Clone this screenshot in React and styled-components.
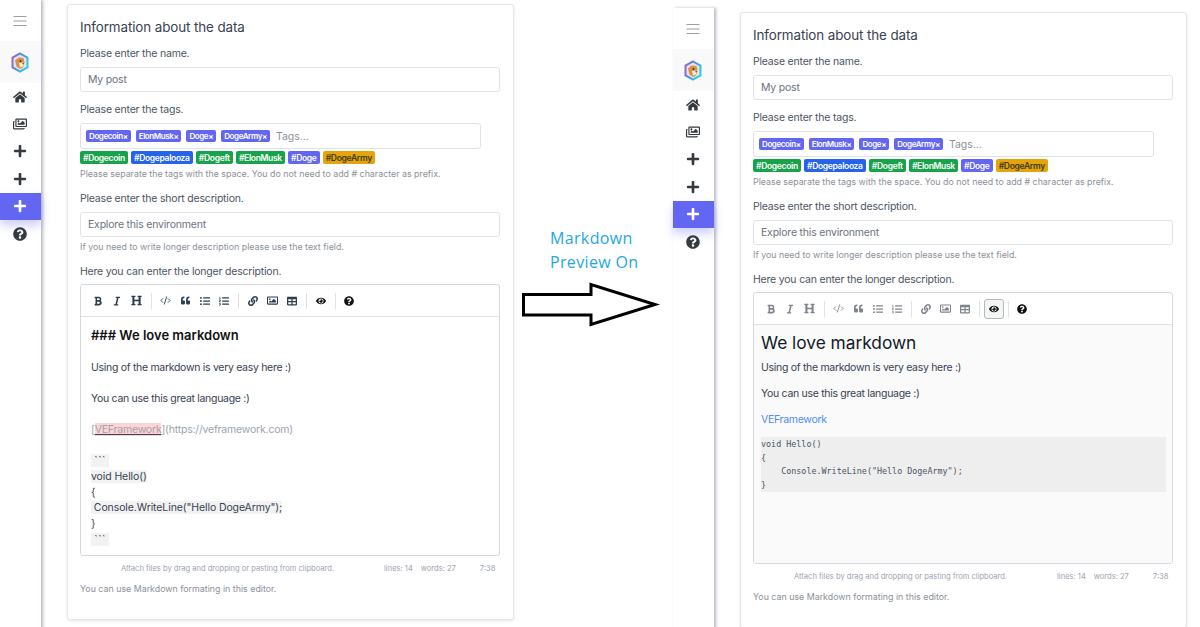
import React from 'react';
import styled, { createGlobalStyle } from 'styled-components';
import {
  FaHome, FaPlus, FaQuestionCircle, FaRegImages, FaBold, FaItalic, FaHeading,
  FaQuoteLeft, FaListUl, FaListOl, FaLink, FaRegImage, FaTable, FaEye
} from 'react-icons/fa';
import { LuCodeXml } from 'react-icons/lu';

const GlobalStyle = createGlobalStyle`
  html, body { margin: 0; padding: 0; background: #fff; height: 627px; overflow: hidden; }
  body { font-family: Inter, "Noto Sans", sans-serif; color: #4b5563; }
`;

const Page = styled.div`
  display: flex;
  width: 1200px;
  height: 627px;
  overflow: hidden;
`;

const Shot = styled.div`
  display: flex;
  flex: none;
  width: ${props => props.$width}px;
  height: 640px;
  margin-top: ${props => props.$top}px;
`;

const Sidebar = styled.nav`
  flex: none;
  width: 41px;
  background: #fff;
  box-shadow: 2px 0 3px rgba(90, 100, 130, 0.45);
  display: flex;
  flex-direction: column;
  align-items: stretch;
`;

const MenuButton = styled.div`
  height: 41px;
  padding-right: 1px;
  display: flex;
  align-items: center;
  justify-content: center;
`;

const LogoBox = styled.div`
  height: 42px;
  padding-right: 1px;
  background: #f9f9f9;
  display: flex;
  align-items: center;
  justify-content: center;
`;

const NavItem = styled.div`
  height: 27.4px;
  padding-right: 1px;
  display: flex;
  align-items: center;
  justify-content: center;
  font-size: 14px;
  color: ${props => (props.$active ? '#fff' : '#343a40')};
  background: ${props => (props.$active ? '#6366f1' : 'transparent')};
  box-shadow: ${props => (props.$active ? '0 6px 10px rgba(99, 102, 241, 0.3)' : 'none')};
`;

const Card = styled.section`
  flex: none;
  width: 447px;
  height: 616px;
  box-sizing: border-box;
  margin: 4px 0 0 26px;
  padding: 13px 13px 0 12px;
  border: 1px solid #e5e7eb;
  border-radius: 3px;
  box-shadow: 0 1px 3px rgba(0, 0, 0, 0.1);
  background: #fff;
`;

const Title = styled.h2`
  margin: 0;
  font-size: 13.4px;
  line-height: 19px;
  letter-spacing: -0.1px;
  font-weight: 400;
  color: #374151;
`;

const Label = styled.div`
  font-size: 10.5px;
  line-height: 14px;
  letter-spacing: -0.2px;
  color: #4b5563;
  margin-top: ${props => props.$top}px;
`;

const Input = styled.div`
  box-sizing: border-box;
  height: 25px;
  margin-top: 6px;
  padding: 0 7px;
  display: flex;
  align-items: center;
  border: 1px solid #dfe3e8;
  border-radius: 3px;
  font-size: 10.5px;
  letter-spacing: -0.2px;
  color: #6b7280;
`;

const TagBox = styled.div`
  box-sizing: border-box;
  width: 401px;
  height: 26px;
  margin-top: 6px;
  padding: 0 5px;
  display: flex;
  align-items: center;
  gap: 5px;
  border: 1px solid #dfe3e8;
  border-radius: 3px;
`;

const Placeholder = styled.span`
  margin-left: 1px;
  font-size: 10.5px;
  color: #8b919a;
`;

const Chip = styled.span`
  display: inline-flex;
  align-items: center;
  height: ${props => (props.$small ? 12 : 13)}px;
  padding: 0 3px;
  border-radius: 2px;
  font-size: ${props => (props.$small ? 8 : 8.5)}px;
  font-weight: 600;
  letter-spacing: ${props => (props.$small ? -0.4 : -0.32)}px;
  white-space: nowrap;
  color: ${props => (props.$dark ? '#3f3a1a' : '#fff')};
  background: ${props => props.$color};
`;

const ChipRow = styled.div`
  display: flex;
  gap: 3.2px;
  margin-top: 2px;
`;

const Help = styled.div`
  font-size: 8.85px;
  line-height: 12px;
  margin-top: ${props => props.$top}px;
  color: #8b919a;
  white-space: nowrap;
`;

const Editor = styled.div`
  box-sizing: border-box;
  height: 272px;
  margin-top: 5px;
  border: 1px solid #d6d9dd;
  border-radius: 3px;
  display: flex;
  flex-direction: column;
`;

const Toolbar = styled.div`
  flex: none;
  height: 32px;
  box-sizing: border-box;
  padding-left: 7px;
  display: flex;
  align-items: center;
  border-bottom: 1px solid #dfe1e4;
  color: ${props => (props.$muted ? '#7f848b' : '#2c3e50')};
`;

const Tool = styled.span`
  width: 19.6px;
  height: 20px;
  box-sizing: border-box;
  display: flex;
  align-items: center;
  justify-content: center;
  font-size: ${props => props.$size || 10}px;
  border: 1px solid ${props => (props.$on ? '#b4b8bc' : 'transparent')};
  background: ${props => (props.$on ? '#f4f5f5' : 'transparent')};
  border-radius: 3px;
  color: ${props => (props.$strong ? '#111' : 'inherit')};
`;

const ToolSep = styled.span`
  width: 1px;
  height: 16px;
  margin: 0 4px 0 4px;
  background: #dfe1e4;
`;

const Source = styled.div`
  padding: 9px 9px 0 10px;
  font-size: 10.5px;
  color: #374151;
`;

const SourceLine = styled.div`
  height: 15.65px;
  line-height: 15.65px;
  letter-spacing: ${props => props.$spacing ?? -0.3}px;
  white-space: pre;
`;

const SourceHead = styled.div`
  height: 18px;
  line-height: 18px;
  font-size: 13px;
  font-weight: 600;
  color: #111;
`;

const Shade = styled.span`
  background: ${props => (props.$red ? 'rgba(255, 0, 0, 0.17)' : 'rgba(0, 0, 0, 0.05)')};
  text-decoration: ${props => (props.$red ? 'underline' : 'none')};
`;

const LinkMark = styled.span`
  color: #9ca3af;
`;

const Preview = styled.div`
  flex: 1;
  padding: 6px 6px 0 7px;
  background: #fafafa;
  font-size: 10.5px;
  letter-spacing: -0.3px;
  color: #374151;
`;

const PreviewTitle = styled.h1`
  margin: 0 0 6px;
  font-size: 17.3px;
  line-height: 24px;
  letter-spacing: 0;
  font-weight: 400;
  color: #111827;
`;

const PreviewText = styled.p`
  margin: 4px 0 12px;
  line-height: 14px;
`;

const PreviewLink = styled.p`
  margin: 0 0 10px;
  line-height: 14px;
  color: #4c8dff;
`;

const CodeBlock = styled.pre`
  margin: 0;
  height: 55px;
  box-sizing: border-box;
  padding-top: 1px;
  background: #eeeeee;
  font-family: "DejaVu Sans Mono", "Liberation Mono", monospace;
  font-size: 8.4px;
  line-height: 13.7px;
  letter-spacing: 0;
  color: #4b5563;
`;

const StatusBar = styled.div`
  display: flex;
  align-items: center;
  box-sizing: border-box;
  height: 23px;
  padding-top: 1px;
  font-size: 7.55px;
  color: #9ca3af;
  white-space: nowrap;
`;

const StatusText = styled.span`
  margin-left: ${props => props.$left}px;
`;

const Middle = styled.div`
  flex: none;
  width: 154px;
  height: 627px;
  box-sizing: border-box;
  padding: 227px 0 0 3px;
`;

const MidText = styled.div`
  margin-left: 28px;
  font-family: "Open Sans", sans-serif;
  font-size: 16px;
  line-height: 23.5px;
  letter-spacing: 0.35px;
  color: #1ea7e8;
`;

const ArrowSvg = styled.svg`
  display: block;
  margin-top: 8px;
`;

const MenuIcon = () => (
  <svg width="14" height="12" viewBox="0 0 14 12" fill="none" stroke="#9a9ea6" strokeWidth="1.2">
    <path d="M0.5 1.5H13.5M0.5 6H13.5M0.5 10.5H13.5" />
  </svg>
);

const Logo = () => (
  <svg width="18" height="21" viewBox="0 0 18 21">
    <defs>
      <linearGradient id="hexStroke" x1="0" y1="0" x2="1" y2="0.6">
        <stop offset="0" stopColor="#a45cc8" />
        <stop offset="0.5" stopColor="#4f8ee0" />
        <stop offset="1" stopColor="#28cfe0" />
      </linearGradient>
    </defs>
    <path d="M9 1.5 16.5 5.7v9.6L9 19.5 1.5 15.3V5.7Z" fill="#e7e3e6" stroke="url(#hexStroke)" strokeWidth="2" />
    <path d="M4 8.5 7.5 5.5 12.5 6 13.5 10.5 12 15.5 9 17 5.5 14.5Z" fill="#d99148" />
    <path d="M8 11 13 10.5 12 14.5 9 15.5Z" fill="#f6ead8" />
    <circle cx="9.5" cy="9" r="0.9" fill="#3a2a1f" />
    <path d="M11 11.5 13 11 12.5 12.5Z" fill="#3a2a1f" />
  </svg>
);

const nav = [FaHome, FaRegImages, FaPlus, FaPlus];

const mainTags = ['Dogecoin×', 'ElonMusk×', 'Doge×', 'DogeArmy×'];

const hashTags = [
  ['#Dogecoin', '#16a34a'],
  ['#Dogepalooza', '#2563eb'],
  ['#Dogeft', '#16a34a'],
  ['#ElonMusk', '#16a34a'],
  ['#Doge', '#6366f1'],
  ['#DogeArmy', '#e5a50a', true]
];

const tools = [
  [[FaBold, 10], [FaItalic, 10], [FaHeading, 11]],
  [[LuCodeXml, 11], [FaQuoteLeft, 9], [FaListUl, 10], [FaListOl, 10]],
  [[FaLink, 10], [FaRegImage, 11], [FaTable, 10]]
];

const SourceBody = () => (
  <Source>
    <SourceHead>### We love markdown</SourceHead>
    <SourceLine />
    <SourceLine>Using of the markdown is very easy here :)</SourceLine>
    <SourceLine />
    <SourceLine>You can use this great language :)</SourceLine>
    <SourceLine />
    <SourceLine $spacing={-0.2}><LinkMark>[</LinkMark><Shade $red><LinkMark>VEFramework</LinkMark></Shade><LinkMark>](https://veframework.com)</LinkMark></SourceLine>
    <SourceLine />
    <SourceLine $spacing={0.4}><Shade>{' ``` '}</Shade></SourceLine>
    <SourceLine $spacing={-0.1}><Shade>void Hello()</Shade></SourceLine>
    <SourceLine>{'{'}</SourceLine>
    <SourceLine $spacing={-0.1}><Shade>{' Console.WriteLine("Hello DogeArmy");'}</Shade></SourceLine>
    <SourceLine>{'}'}</SourceLine>
    <SourceLine $spacing={0.4}><Shade>{' ``` '}</Shade></SourceLine>
  </Source>
);

const PreviewBody = () => (
  <Preview>
    <PreviewTitle>We love markdown</PreviewTitle>
    <PreviewText>Using of the markdown is very easy here :)</PreviewText>
    <PreviewText>You can use this great language :)</PreviewText>
    <PreviewLink>VEFramework</PreviewLink>
    <CodeBlock>{'void Hello()\n{\n    Console.WriteLine("Hello DogeArmy");\n}'}</CodeBlock>
  </Preview>
);

const Screen = ({ preview, width, top }) => (
  <Shot $width={width} $top={top}>
    <Sidebar>
      <MenuButton><MenuIcon /></MenuButton>
      <LogoBox><Logo /></LogoBox>
      {nav.map((Icon, i) => <NavItem key={i}><Icon /></NavItem>)}
      <NavItem $active><FaPlus /></NavItem>
      <NavItem><FaQuestionCircle /></NavItem>
    </Sidebar>
    <Card>
      <Title>Information about the data</Title>
      <Label $top={10}>Please enter the name.</Label>
      <Input>My post</Input>
      <Label $top={11}>Please enter the tags.</Label>
      <TagBox>
        {mainTags.map(t => <Chip key={t} $small $color="#6366f1">{t}</Chip>)}
        <Placeholder>Tags...</Placeholder>
      </TagBox>
      <ChipRow>
        {hashTags.map(([t, c, dark]) => <Chip key={t} $color={c} $dark={dark}>{t}</Chip>)}
      </ChipRow>
      <Help $top={4}>Please separate the tags with the space. You do not need to add # character as prefix.</Help>
      <Label $top={12}>Please enter the short description.</Label>
      <Input>Explore this environment</Input>
      <Help $top={4}>If you need to write longer description please use the text field.</Help>
      <Label $top={12}>Here you can enter the longer description.</Label>
      <Editor>
        <Toolbar $muted={preview}>
          {tools.map((group, g) => (
            <React.Fragment key={g}>
              {group.map(([Icon, size], i) => <Tool key={i} $size={size}><Icon /></Tool>)}
              <ToolSep />
            </React.Fragment>
          ))}
          <Tool $on={preview} $strong><FaEye /></Tool>
          <ToolSep />
          <Tool $strong><FaQuestionCircle /></Tool>
        </Toolbar>
        {preview ? <PreviewBody /> : <SourceBody />}
      </Editor>
      <StatusBar>
        <StatusText $left={41}>Attach files by drag and dropping or pasting from clipboard.</StatusText>
        <StatusText $left={50}>lines: 14</StatusText>
        <StatusText $left={8}>words: 27</StatusText>
        <StatusText $left={24}>7:38</StatusText>
      </StatusBar>
      <Help $top={4}>You can use Markdown formating in this editor.</Help>
    </Card>
  </Shot>
);

const App = () => (
  <Page>
    <GlobalStyle />
    <Screen width={519} top={0} />
    <Middle>
      <MidText>Markdown<br />Preview On</MidText>
      <ArrowSvg width="140" height="46" viewBox="0 0 140 46">
        <path d="M1.5 12.5H69V2.5L133 22.5 69 42.5V33H1.5Z" fill="#fff" stroke="#000" strokeWidth="3" />
      </ArrowSvg>
    </Middle>
    <Screen preview width={527} top={8} />
  </Page>
);

export default App;
